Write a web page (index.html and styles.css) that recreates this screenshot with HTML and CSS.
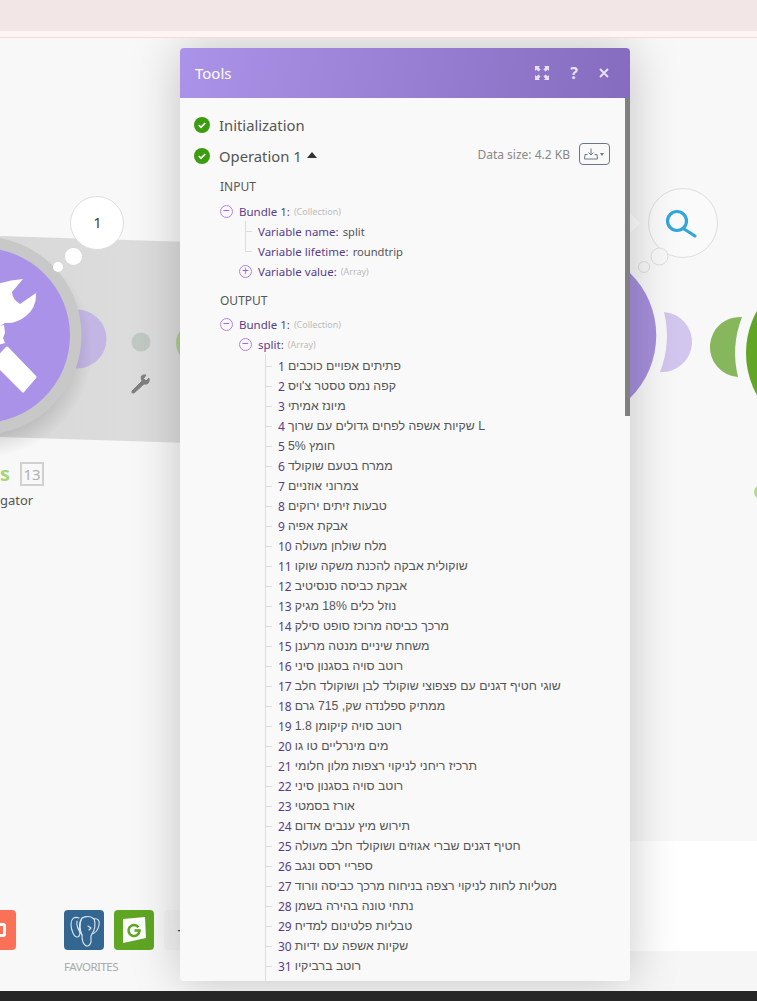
FILE: index.html
```html
<!DOCTYPE html>
<html lang="en">
<head>
<meta charset="utf-8">
<title>Tools</title>
<link rel="stylesheet" href="styles.css">
</head>
<body>
<div class="topbar"></div>
<div class="notice"></div>
<main class="canvas">
  <svg class="scene" viewBox="0 38 757 953" width="757" height="953" aria-hidden="true">
    <defs>
      <linearGradient id="band" x1="0" x2="1" y1="0" y2="0">
        <stop offset="0" stop-color="#d8d8d8"/><stop offset="1" stop-color="#dedede"/>
      </linearGradient>
      <radialGradient id="glow" cx="0.5" cy="0.5" r="0.5">
        <stop offset="0.8" stop-color="#000" stop-opacity="0.12"/><stop offset="1" stop-color="#000" stop-opacity="0"/>
      </radialGradient>
    </defs>
    <polygon points="0,236 190,242 190,443 0,437" fill="url(#band)"/>
    <circle cx="77" cy="339" r="29.5" fill="#c4b6e4"/>
    <circle cx="141" cy="342" r="9.5" fill="#c1c9c5"/>
    <circle cx="197" cy="343" r="21" fill="#b0ce94"/>
    <circle cx="-17" cy="348" r="110" fill="url(#glow)"/>
    <circle cx="-17.5" cy="335.500" r="99" fill="#c8c8c8"/>
    <circle cx="-17.5" cy="335.500" r="87.500" fill="#aa92e8"/>
    <path d="M-5 285 Q8 280 23 279 L12 292 Q12 299 20 304 L36 293 Q37 307 26 316 Q16 324 5 323 L0 326 L-5 326 Z" fill="#fff"/>
    <path d="M-2 326 L4 325 L5 333 L3 338 L5 343 L-2 345 Z" fill="#fff"/>
    <polygon points="7,348 35,377 23,391 -6,362" fill="#fff" stroke="#fff" stroke-width="3" stroke-linejoin="round"/>
    <path d="M132 391 L142 381 Q139 374 146 375 L143.500 378.500 L146 381 L149 378 Q150 385 144 384 L134 393 Q131 393.500 132 391 Z" fill="#808080" stroke="#808080" stroke-width="1"/>
    <circle cx="97" cy="223" r="26.500" fill="#fff" stroke="#dedede"/>
    <circle cx="73.500" cy="256.500" r="8.500" fill="#fff"/>
    <circle cx="58" cy="267" r="5" fill="#fff"/>
    <text class="bubble-count" x="97.500" y="228" text-anchor="middle">1</text>
    <text class="module-initial" x="0" y="481">s</text>
    <rect x="21" y="463" width="22" height="22" fill="none" stroke="#d0d0d0" stroke-width="2"/>
    <text class="module-id" x="32" y="479.500" text-anchor="middle">13</text>
    <text class="module-sub" x="0" y="505">gator</text>

    <path d="M630 273 A87.500 87.500 0 0 1 630 398 Z" fill="#a68fdc"/>
    <path d="M664 312 A30 30 0 0 1 660 372 A100 100 0 0 0 664 312 Z" fill="#d3c6ee"/>
    <path d="M742 317 A30 30 0 1 0 738 377 A100 100 0 0 1 742 317 Z" fill="#86b75c"/>
    <circle cx="833" cy="353" r="87" fill="#62a625"/>
    <circle cx="761" cy="492" r="7" fill="#b0d890"/>
    <polygon points="630,213 640,223 630,233" fill="#fff"/>
    <circle cx="683" cy="223" r="34.500" fill="#fafafa" stroke="#dedede"/>
    <circle cx="659.500" cy="256.500" r="8.500" fill="#f8f8f8" stroke="#dedede"/>
    <circle cx="644" cy="267" r="5.500" fill="#f8f8f8" stroke="#dedede"/>
    <circle cx="677" cy="221" r="9.500" fill="none" stroke="#34a5dc" stroke-width="3.200"/>
    <path d="M684 229 L695 236" fill="none" stroke="#34a5dc" stroke-width="3.200" stroke-linecap="round"/>
  </svg>

  <div class="dock">
    <div class="dock-tiles">
      <div class="tile tile-orange"><span class="tile-glyph"></span></div>
      <div class="favorites">
        <div class="favorites-row">
          <div class="tile tile-pg">
            <svg viewBox="0 0 40 40" width="40" height="40" fill="none" stroke="#dbe7f1" stroke-width="1.100" stroke-linejoin="round" stroke-linecap="round">
              <path d="M15 8 C10 6 7 9 7 14 C7 20 10 27 13 27 C15 27 16 25 16 22 C15 17 15 12 18 8"/>
              <path d="M18 8 C22 6 27 6 30 9 C34 8 36 11 35 15 C34 20 32 23 28 24 L27 26 L27 32 C26 36 23 37 21 35 C18 33 18 29 18 25 C16 21 15 13 18 8 Z"/>
              <path d="M30 9 C32 13 31 20 28 24"/>
              <path d="M13 11 C12 16 14 20 18 25"/>
              <path d="M24 16 L27 18 L25 20"/>
            </svg>
          </div>
          <div class="tile tile-g">
            <svg viewBox="0 0 40 40" width="40" height="40">
              <path d="M9 9 L31 7 L32 28 L9 33 Z" fill="#fff"/>
              <path d="M24.500 17.300 A5.500 5.500 0 1 0 25.500 20.500 L20.500 20.500" fill="none" stroke="#5fa623" stroke-width="2.600"/>
            </svg>
          </div>
          <div class="tile tile-add">+</div>
        </div>
        <div class="favorites-label">FAVORITES</div>
      </div>
    </div>
  </div>

  <section class="modal">
    <header class="modal-head">
      <h1 class="modal-title">Tools</h1>
      <div class="modal-actions">
        <svg class="head-icon" viewBox="0 0 14 14" width="14" height="14" fill="#e8e2f6">
          <path d="M0 0 H5 L3.600 1.400 L5.600 3.400 L3.400 5.600 L1.400 3.600 L0 5 Z M14 0 V5 L12.600 3.600 L10.600 5.600 L8.400 3.400 L10.400 1.400 L9 0 Z M0 14 V9 L1.400 10.400 L3.400 8.400 L5.600 10.600 L3.600 12.600 L5 14 Z M14 14 H9 L10.400 12.600 L8.400 10.600 L10.600 8.400 L12.600 10.400 L14 9 Z"/>
        </svg>
        <span class="head-q">?</span>
        <svg class="head-icon" viewBox="0 0 10 10" width="10" height="10" stroke="#e8e2f6" stroke-width="1.800" fill="none">
          <path d="M1 1 L9 9 M9 1 L1 9"/>
        </svg>
      </div>
    </header>
    <div class="modal-body">
      <div class="scroll-thumb"></div>
      <div class="status-row">
        <svg class="check" viewBox="0 0 16 16" width="16" height="16"><circle cx="8" cy="8" r="8" fill="#3b9c0f"/><path d="M4.800 8.200 L7 10.300 L11.200 6" fill="none" stroke="#fff" stroke-width="1.700"/></svg>
        <span>Initialization</span>
      </div>
      <div class="status-row">
        <svg class="check" viewBox="0 0 16 16" width="16" height="16"><circle cx="8" cy="8" r="8" fill="#3b9c0f"/><path d="M4.800 8.200 L7 10.300 L11.200 6" fill="none" stroke="#fff" stroke-width="1.700"/></svg>
        <span>Operation 1</span>
        <span class="caret"></span>
        <span class="data-size">Data size: 4.2 KB</span>
        <button class="download" type="button">
          <svg viewBox="0 0 14 12" width="14" height="12" fill="none" stroke="#6b7786" stroke-width="1"><path d="M7 0.500 V7 M4.500 4.500 L7 7 L9.500 4.500 M3.500 6.500 H1 L0.500 11 H13.500 L13 6.500 H10.500"/></svg>
          <span class="download-caret"></span>
        </button>
      </div>

      <h2 class="section-label input-label">INPUT</h2>
      <div class="node bundle"><span class="toggle">−</span><span class="key">Bundle 1:</span><span class="type">(Collection)</span></div>
      <div class="kids-input">
        <div class="leaf"><span class="key">Variable name:</span><span class="val">split</span></div>
        <div class="leaf"><span class="key">Variable lifetime:</span><span class="val">roundtrip</span></div>
        <div class="node sub-inner"><span class="toggle">+</span><span class="key">Variable value:</span><span class="type">(Array)</span></div>
      </div>

      <h2 class="section-label output-label">OUTPUT</h2>
      <div class="node bundle"><span class="toggle">−</span><span class="key">Bundle 1:</span><span class="type">(Collection)</span></div>
      <div class="node sub"><span class="toggle">−</span><span class="key">split:</span><span class="type">(Array)</span></div>
      <ol class="items">
        <li class="item"><span class="num">1</span><span class="he">פתיתים אפויים כוכבים</span></li>
        <li class="item"><span class="num">2</span><span class="he">קפה נמס טסטר צ'ויס</span></li>
        <li class="item"><span class="num">3</span><span class="he">מיונז אמיתי</span></li>
        <li class="item"><span class="num">4</span><span class="he">שקיות אשפה לפחים גדולים עם שרוך L</span></li>
        <li class="item"><span class="num">5</span><span class="he">חומץ 5%</span></li>
        <li class="item"><span class="num">6</span><span class="he">ממרח בטעם שוקולד</span></li>
        <li class="item"><span class="num">7</span><span class="he">צמרוני אוזניים</span></li>
        <li class="item"><span class="num">8</span><span class="he">טבעות זיתים ירוקים</span></li>
        <li class="item"><span class="num">9</span><span class="he">אבקת אפיה</span></li>
        <li class="item"><span class="num">10</span><span class="he">מלח שולחן מעולה</span></li>
        <li class="item"><span class="num">11</span><span class="he">שוקולית אבקה להכנת משקה שוקו</span></li>
        <li class="item"><span class="num">12</span><span class="he">אבקת כביסה סנסיטיב</span></li>
        <li class="item"><span class="num">13</span><span class="he">נוזל כלים 18% מגיק</span></li>
        <li class="item"><span class="num">14</span><span class="he">מרכך כביסה מרוכז סופט סילק</span></li>
        <li class="item"><span class="num">15</span><span class="he">משחת שיניים מנטה מרענן</span></li>
        <li class="item"><span class="num">16</span><span class="he">רוטב סויה בסגנון סיני</span></li>
        <li class="item"><span class="num">17</span><span class="he">שוגי חטיף דגנים עם פצפוצי שוקולד לבן ושוקולד חלב</span></li>
        <li class="item"><span class="num">18</span><span class="he">ממתיק ספלנדה שק, 715 גרם</span></li>
        <li class="item"><span class="num">19</span><span class="he">רוטב סויה קיקומן 1.8</span></li>
        <li class="item"><span class="num">20</span><span class="he">מים מינרליים טו גו</span></li>
        <li class="item"><span class="num">21</span><span class="he">תרכיז ריחני לניקוי רצפות מלון חלומי</span></li>
        <li class="item"><span class="num">22</span><span class="he">רוטב סויה בסגנון סיני</span></li>
        <li class="item"><span class="num">23</span><span class="he">אורז בסמטי</span></li>
        <li class="item"><span class="num">24</span><span class="he">תירוש מיץ ענבים אדום</span></li>
        <li class="item"><span class="num">25</span><span class="he">חטיף דגנים שברי אגוזים ושוקולד חלב מעולה</span></li>
        <li class="item"><span class="num">26</span><span class="he">ספריי רסס ונגב</span></li>
        <li class="item"><span class="num">27</span><span class="he">מטליות לחות לניקוי רצפה בניחוח מרכך כביסה וורוד</span></li>
        <li class="item"><span class="num">28</span><span class="he">נתחי טונה בהירה בשמן</span></li>
        <li class="item"><span class="num">29</span><span class="he">טבליות פלטינום למדיח</span></li>
        <li class="item"><span class="num">30</span><span class="he">שקיות אשפה עם ידיות</span></li>
        <li class="item"><span class="num">31</span><span class="he">רוטב ברביקיו</span></li>
      </ol>
    </div>
  </section>
</main>
<div class="footer"></div>
</body>
</html>
```
FILE: styles.css
```css
* { box-sizing: border-box; }
html, body { margin: 0; padding: 0; height: 100%; }
body {
  display: flex;
  flex-direction: column;
  height: 1001px;
  overflow: hidden;
  background: #f8f8f8;
  font-family: "Noto Sans", "Liberation Sans", sans-serif;
  color: #555;
}
.topbar { height: 31px; background: #f2e6e6; flex: none; }
.notice { height: 7px; background: #fff5f3; border-bottom: 1px solid #f5dad5; flex: none; }
.canvas { position: relative; flex: 1; overflow: hidden; background: #f8f8f8; display: flex; flex-direction: column; justify-content: flex-end; }
.footer { height: 10px; background: #262626; flex: none; }
.scene { position: absolute; left: 0; top: 0; display: block; }
.bubble-count { font-size: 15px; fill: #444; font-family: "Noto Sans", sans-serif; }
.module-initial { font-size: 20px; font-weight: 700; fill: #a8d472; font-family: "Noto Sans", sans-serif; }
.module-id { font-size: 15px; fill: #b0b0b0; font-family: "Noto Sans", sans-serif; }
.module-sub { font-size: 13px; fill: #555; font-family: "Noto Sans", sans-serif; }

.dock { position: relative; height: 150px; flex: none; display: flex; align-items: flex-end; background: linear-gradient(#fff 0 110px, #f6f6f6 110px); background-size: 127px 100%; background-position: right top; background-repeat: no-repeat; }
.dock-tiles { display: flex; gap: 48px; padding: 0 0 16px 0; align-items: flex-start; margin-left: -24px; }
.tile { width: 40px; height: 40px; border-radius: 4px; flex: none; display: flex; align-items: center; justify-content: center; }
.tile-orange { background: #fb7158; }
.tile-glyph { width: 14px; height: 14px; border: 3px solid #fff; border-radius: 3px; margin-left: 6px; }
.tile-pg { background: #336791; }
.tile-g { background: #5fa623; }
.tile-add { background: #f3f3f3; color: #444; font-size: 18px; justify-content: flex-start; padding-left: 13px; }
.favorites-row { display: flex; gap: 10px; }
.favorites-label { margin-top: 9px; font-size: 11.500px; color: #aaa; line-height: 16px; letter-spacing: -0.5px; }

.modal {
  position: absolute;
  left: 180px;
  top: 10px;
  width: 450px;
  height: 933px;
  border-radius: 4px;
  overflow: hidden;
  background: #f9f9f9;
  box-shadow: 0 0 50px rgba(0, 0, 0, 0.22);
  display: flex;
  flex-direction: column;
}
.modal-head {
  height: 50px;
  flex: none;
  background: linear-gradient(100deg, #ab93e9, #866cbe);
  display: flex;
  align-items: center;
  justify-content: space-between;
  padding: 0 21px 0 15px;
}
.modal-title { margin: 0; font-size: 15px; font-weight: 400; color: #fff; }
.modal-actions { display: flex; align-items: center; gap: 21px; }
.head-q { color: #e8e2f6; font-weight: 700; font-size: 16px; line-height: 16px; }
.modal-body { position: relative; flex: 1; overflow: hidden; padding: 11px 20px 0 14px; }
.scroll-thumb { position: absolute; right: 0; top: 0; width: 5px; height: 318px; background: #808080; }
.status-row { display: flex; align-items: center; height: 31px; font-size: 14.800px; color: #555; }
.check { margin-right: 9px; flex: none; }
.caret { width: 0; height: 0; border-left: 5px solid transparent; border-right: 5px solid transparent; border-bottom: 6px solid #333; margin-left: 5px; margin-bottom: 2px; }
.data-size { margin-left: auto; font-size: 12px; color: #888; margin-right: 9px; margin-bottom: 3px; }
.download { width: 31px; height: 22px; padding: 0 0 0 4px; background: none; border: 1px solid #6b7786; border-radius: 4px; display: flex; align-items: center; gap: 2px; margin-bottom: 3px; }
.download-caret { width: 0; height: 0; border-left: 2.500px solid transparent; border-right: 2.500px solid transparent; border-top: 3px solid #6b7786; }
.section-label { margin: 0; font-size: 12px; font-weight: 400; color: #555; line-height: 20px; padding-left: 26px; }
.input-label { margin-top: 6px; margin-bottom: 4px; }
.output-label { margin-top: 10px; margin-bottom: 3px; }
.node, .leaf, .item { display: flex; align-items: center; height: 20px; font-size: 11.500px; white-space: nowrap; }
.bundle { margin-left: 26px; }
.sub { margin-left: 45px; }
.toggle { width: 13px; height: 13px; border-radius: 50%; border: 1px solid #b480f0; color: #9a5fe6; font-size: 12px; line-height: 10px; text-align: center; margin-right: 6px; flex: none; }
.key { color: #5a3c8c; }
.type { color: #bbb; font-size: 9px; margin-left: 4px; }
.val { color: #555; margin-left: 4px; font-size: 11.200px; }
.kids-input { position: relative; margin-left: 51px; }
.kids-input::before { content: ""; position: absolute; left: 0; top: 0; height: 30px; border-left: 1px solid #ddd; }
.leaf { position: relative; padding-left: 13px; }
.leaf::before { content: ""; position: absolute; left: 0; top: 10px; width: 7px; border-top: 1px solid #ddd; }
.sub-inner { margin-left: -6px; }
.items { list-style: none; margin: 0 0 0 71px; padding: 2px 0 20px; border-left: 1px solid #ddd; }
.item { padding-left: 12px; position: relative; color: #555; }
.item::before { content: ""; position: absolute; left: 0; top: 10px; width: 6px; border-top: 1px solid #ddd; }
.num { color: #5a3c8c; font-size: 12px; margin-right: 3px; }
.he { font-family: "Liberation Sans", sans-serif; font-size: 12.300px; }
```
